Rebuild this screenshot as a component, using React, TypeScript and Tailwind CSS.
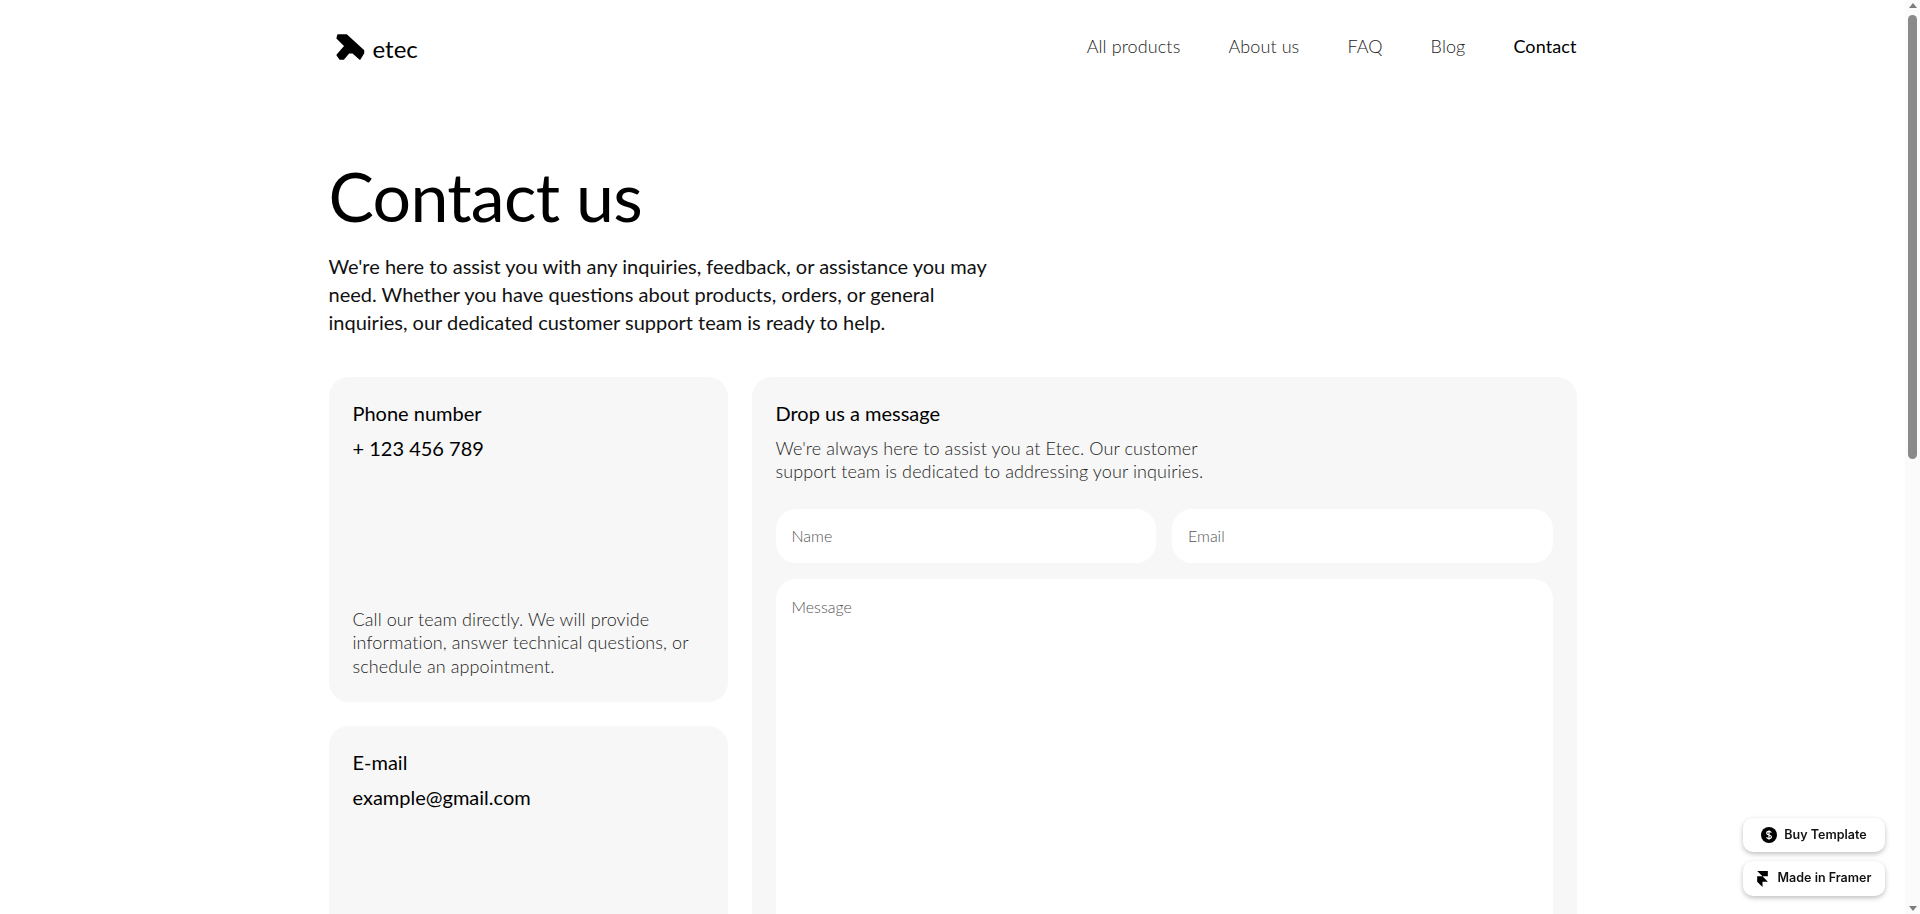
const Logo = () => (
  <svg width="30" height="28" viewBox="0 0 30 28" fill="#000" stroke="#000" strokeWidth="1.5" strokeLinejoin="round">
    <path d="M3 2 H11.5 L28.5 17.5 V20 L24.8 26 L17.8 19.8 H13.8 L8.5 26 H5 L2.2 22 L10 13 L2.2 5.2 Z" />
  </svg>
);

const DollarIcon = () => (
  <svg width="16" height="16" viewBox="0 0 16 16">
    <circle cx="8" cy="8" r="8" fill="#000" />
    <path d="M10.3 5.6C10 4.8 9.1 4.4 8 4.4c-1.3 0-2.3.6-2.3 1.8 0 2.4 4.7 1.2 4.7 3.6 0 1.2-1.1 1.8-2.4 1.8-1.2 0-2.1-.5-2.4-1.4M8 3.3v9.4" fill="none" stroke="#fff" strokeWidth="1.2" />
  </svg>
);

const FramerIcon = () => (
  <svg width="11" height="16" viewBox="0 0 12 18" fill="#000">
    <path d="M0 0h12v6H6L0 0zM0 6h6l6 6H6v6l-6-6V6z" />
  </svg>
);

const Card = ({ title, value, text }: { title: string; value: string; text?: React.ReactNode }) => (
  <div className="bg-[#f7f7f7] rounded-[20px] p-6 h-[325px] flex flex-col justify-between shrink-0">
    <div>
      <div className="text-[20px] leading-[25px] text-black">{title}</div>
      <div className="text-[20px] leading-[28px] text-black mt-[8px]">{value}</div>
    </div>
    {text && <div className="text-[18px] leading-[23.4px] tracking-[0.1px] font-light text-[#222]">{text}</div>}
  </div>
);

const Field = ({ label, className }: { label: string; className: string }) => (
  <div className={`bg-white text-[16px] font-light text-[#555] px-4 ${className}`}>{label}</div>
);

export default function App() {
  const links = ["All products", "About us", "FAQ", "Blog"];
  return (
    <div className="flex h-[914px] overflow-hidden bg-white font-['Lato',sans-serif]">
      <div className="flex-1 min-w-0">
        <div className="w-[1248px] mx-auto">
          <header className="flex items-center justify-between h-[94px]">
            <div className="flex items-center gap-[8px] pl-[6px]">
              <Logo />
              <span className="text-[24px] text-black mt-[3px]">etec</span>
            </div>
            <nav className="flex gap-[48px] text-[18px] tracking-[0.1px] font-light text-[#222] -mt-[2px]">
              {links.map((l) => (
                <span key={l}>{l}</span>
              ))}
              <span className="font-normal text-black">Contact</span>
            </nav>
          </header>
          <h1 className="text-[68px] leading-[80px] tracking-[-0.7px] text-black mt-[62px]">Contact us</h1>
          <p className="text-[20px] leading-[28px] text-[#111] mt-[16px]">
            We're here to assist you with any inquiries, feedback, or assistance you may
            <br />
            need. Whether you have questions about products, orders, or general
            <br />
            inquiries, our dedicated customer support team is ready to help.
          </p>
          <div className="flex gap-6 mt-[41px]">
            <div className="w-[399px] flex flex-col gap-6">
              <Card
                title="Phone number"
                value="+ 123 456 789"
                text={<>Call our team directly. We will provide<br />information, answer technical questions, or<br />schedule an appointment.</>}
              />
              <Card title="E-mail" value="example@gmail.com" />
            </div>
            <div className="flex-1 bg-[#f7f7f7] rounded-[20px] p-6 h-[674px]">
              <div className="text-[20px] leading-[25px] text-black">Drop us a message</div>
              <p className="text-[18px] leading-[23.4px] tracking-[0.1px] font-light text-[#222] mt-[11px]">
                We're always here to assist you at Etec. Our customer
                <br />
                support team is dedicated to addressing your inquiries.
              </p>
              <div className="grid grid-cols-2 gap-4 mt-[25px]">
                <Field label="Name" className="h-[54px] rounded-[20px] flex items-center" />
                <Field label="Email" className="h-[54px] rounded-[20px] flex items-center" />
                <Field label="Message" className="col-span-2 h-[480px] rounded-[20px] pt-[16px]" />
              </div>
            </div>
          </div>
        </div>
      </div>
      <div className="w-[15px] shrink-0 bg-[#fbfbfb] flex flex-col items-center relative">
        <div className="mt-[3px] w-0 h-0 border-x-[4px] border-x-transparent border-b-[5px] border-b-[#7d7d7d]" />
        <div className="mt-[7px] w-[9px] h-[444px] rounded-[5px] bg-[#8a8a8a]" />
        <div className="absolute bottom-[3px] w-0 h-0 border-x-[4px] border-x-transparent border-t-[5px] border-t-[#7d7d7d]" />
      </div>
      <div className="fixed right-[35px] bottom-[18px] flex flex-col gap-[9px] w-[142px] font-['Inter',sans-serif]">
        <div className="h-[34px] bg-white rounded-[10px] shadow-[0_2px_5px_rgba(0,0,0,0.25)] flex items-center justify-center gap-[7px] text-[12.5px] font-semibold text-[#111]">
          <DollarIcon /> Buy Template
        </div>
        <div className="h-[35px] bg-white rounded-[10px] shadow-[0_2px_5px_rgba(0,0,0,0.25)] flex items-center justify-center gap-[10px] text-[12.5px] font-semibold text-[#111]">
          <FramerIcon /> Made in Framer
        </div>
      </div>
    </div>
  );
}
